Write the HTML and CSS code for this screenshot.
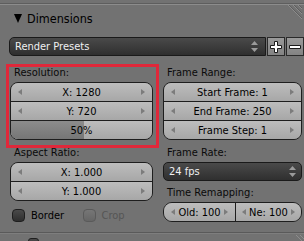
FILE: index.html
```html
<!DOCTYPE html>
<html>
<head>
<meta charset="utf-8">
<link rel="stylesheet" href="styles.css">
</head>
<body>
<div class="panel">
  <div class="header">
    <svg class="tri" width="8" height="9" viewBox="0 0 8 9"><path d="M0 0 H8 L4 9 Z" fill="#000"/></svg>
    <span>Dimensions</span>
  </div>
  <svg class="grip grip-top" width="16" height="16" viewBox="0 0 16 16"><path d="M2 0 L16 14 M7 0 L16 9 M12 0 L16 4" stroke="#8c8c8c" stroke-width="1"/><path d="M3 0 L16 13 M8 0 L16 8 M13 0 L16 3" stroke="#5e5e5e" stroke-width="1"/></svg>

  <div class="presets">
    <div class="menu presets-menu">
      <span>Render Presets</span>
      <svg class="updown" width="7" height="11" viewBox="0 0 7 11"><path d="M0 4 L3.5 0 L7 4 Z M0 7 L3.5 11 L7 7 Z" fill="#9a9a9a"/></svg>
    </div>
    <div class="btn"><svg width="14" height="14" viewBox="0 0 14 14"><path d="M5.5 1.5 H8.5 V5.5 H12.5 V8.5 H8.5 V12.5 H5.5 V8.5 H1.5 V5.5 H5.5 Z" fill="#fff" stroke="#1a1a1a" stroke-width="1"/></svg></div>
    <div class="btn"><svg width="14" height="14" viewBox="0 0 14 14"><path d="M1.5 5.5 H12.5 V8.5 H1.5 Z" fill="#fff" stroke="#1a1a1a" stroke-width="1"/></svg></div>
  </div>

  <div class="cols">
    <div class="col">
      <div class="label">Resolution:</div>
      <div class="stack">
        <div class="num"><i class="al"></i><span>X: 1280</span><i class="ar"></i></div>
        <div class="num"><i class="al"></i><span>Y: 720</span><i class="ar"></i></div>
        <div class="num slider"><div class="fill" style="width:52%"></div><span>50%</span></div>
      </div>
      <div class="label gap">Aspect Ratio:</div>
      <div class="stack">
        <div class="num"><i class="al"></i><span>X: 1.000</span><i class="ar"></i></div>
        <div class="num"><i class="al"></i><span>Y: 1.000</span><i class="ar"></i></div>
      </div>
      <div class="checks">
        <div class="check"><span class="box"></span><span>Border</span></div>
        <div class="check off"><span class="box"></span><span>Crop</span></div>
      </div>
    </div>
    <div class="col">
      <div class="label">Frame Range:</div>
      <div class="stack">
        <div class="num"><i class="al"></i><span>Start Frame: 1</span><i class="ar"></i></div>
        <div class="num"><i class="al"></i><span>End Frame: 250</span><i class="ar"></i></div>
        <div class="num"><i class="al"></i><span>Frame Step: 1</span><i class="ar"></i></div>
      </div>
      <div class="label gap">Frame Rate:</div>
      <div class="menu fps">
        <span>24 fps</span>
        <svg class="updown" width="7" height="11" viewBox="0 0 7 11"><path d="M0 4 L3.5 0 L7 4 Z M0 7 L3.5 11 L7 7 Z" fill="#9a9a9a"/></svg>
      </div>
      <div class="label gap2">Time Remapping:</div>
      <div class="stack row">
        <div class="num tight"><i class="al"></i><span>Old: 100</span><i class="ar"></i></div>
        <div class="num tight"><i class="al"></i><span>Ne: 100</span><i class="ar"></i></div>
      </div>
    </div>
  </div>

  <div class="divider"></div>
  <div class="next"><span class="box small"></span></div>
  <svg class="grip grip-bottom" width="12" height="8" viewBox="0 0 12 8"><path d="M4 2 L10 8 M8 2 L14 8" stroke="#8c8c8c" stroke-width="1"/></svg>

  <div class="highlight"></div>
</div>
</body>
</html>
```
FILE: styles.css
```css
* { box-sizing: border-box; }
html, body { margin: 0; padding: 0; }
body {
  width: 304px;
  height: 241px;
  overflow: hidden;
  background: #727272;
  font-family: "DejaVu Sans Condensed", "DejaVu Sans", sans-serif;
  font-stretch: condensed;
  font-size: 11px;
  color: #000;
}
.panel { position: relative; height: 241px; padding-top: 3px; }
.header {
  height: 30px;
  border-top: 1px solid #5e5e5e;
  box-shadow: inset 0 1px 0 #8c8c8c;
  display: flex;
  align-items: center;
  padding-left: 14px;
  padding-bottom: 1px;
  font-size: 12.5px;
}
.tri { margin-right: 5px; margin-top: 1px; }
.grip { position: absolute; }
.grip-top { right: 2px; top: 5px; }
.grip-bottom { right: 0; bottom: 0; }

.presets {
  display: flex;
  height: 19px;
  margin-top: 4px;
  margin-left: 9px;
  gap: 1px;
}
.menu {
  display: flex;
  align-items: center;
  justify-content: space-between;
  background: linear-gradient(#4a4a4a, #2f2f2f);
  border: 1px solid #1a1a1a;
  color: #f0f0f0;
  padding: 0 5px 0 5px;
  height: 19px;
}
.presets-menu { flex: 1; border-radius: 5px 0 0 5px; padding-right: 7px; }
.btn {
  width: 18px;
  height: 19px;
  flex: none;
  background: linear-gradient(#9a9a9a, #838383);
  border: 1px solid #2a2a2a;
  display: flex;
  align-items: center;
  justify-content: center;
}

.cols {
  display: grid;
  grid-template-columns: 143px 139px;
  column-gap: 10px;
  padding-left: 10px;
  margin-top: 7px;
}
.col { display: flex; flex-direction: column; }
.label {
  height: 19px;
  display: flex;
  align-items: flex-end;
  padding-left: 4px;
  padding-bottom: 3px;
  line-height: 13px;
  color: #0a0a0a;
}
.label.gap { height: 22px; }
.label.gap2 { height: 21px; }

.stack {
  border: 1px solid #1e1e1e;
  border-radius: 8px;
  overflow: hidden;
  display: flex;
  flex-direction: column;
}
.stack.row { flex-direction: row; border-radius: 9px; }
.num {
  position: relative;
  height: 19px;
  display: flex;
  align-items: center;
  justify-content: space-between;
  padding: 0 7px;
  background: linear-gradient(#bdbdbd, #a7a7a7);
  border-top: 1px solid #1e1e1e;
}
.num:first-child { border-top: none; height: 18px; }
.stack.row .num { border-top: none; border-left: 1px solid #1e1e1e; flex: 1; height: 18px; }
.stack.row .num:first-child { border-left: none; flex: none; width: 71px; }
.num.tight { padding: 0 5px; justify-content: center; gap: 3px; }
.num span { position: relative; }
.al, .ar { width: 0; height: 0; border-top: 3.5px solid transparent; border-bottom: 3.5px solid transparent; }
.al { border-right: 4px solid #7c7c7c; }
.ar { border-left: 4px solid #7c7c7c; }
.num.slider { justify-content: center; padding: 0; }
.fill {
  position: absolute;
  left: 0; top: 0; bottom: 0;
  background: linear-gradient(#8c8c8c, #767676);
}

.fps { border-radius: 5px; }

.checks {
  display: flex;
  height: 13px;
  margin-top: 8px;
  padding-left: 2px;
}
.check { display: flex; align-items: center; gap: 6px; width: 76px; }
.box {
  width: 13px;
  height: 13px;
  border-radius: 4px;
  border: 1px solid #1e1e1e;
  background: linear-gradient(#4a4a4a, #2e2e2e);
  flex: none;
}
.check.off { color: #555; }
.check.off .box { background: linear-gradient(#767676, #666); border-color: #5a5a5a; }

.divider {
  margin-top: 10px;
  height: 2px;
  border-top: 1px solid #5a5a5a;
  border-bottom: 1px solid #7e7e7e;
}
.next { padding-left: 28px; padding-top: 4px; }
.box.small { display: block; width: 11px; height: 10px; border-radius: 3px; }

.highlight {
  position: absolute;
  left: 6px;
  top: 64px;
  width: 153px;
  height: 84px;
  border: 3px solid #e0283a;
}
```
